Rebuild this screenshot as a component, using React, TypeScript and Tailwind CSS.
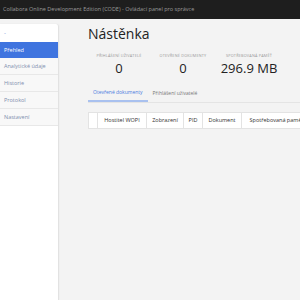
export default function App() {
  const nav = ["Analytické údaje", "Historie", "Protokol", "Nastavení"];
  return (
    <div className="flex h-[300px] w-[300px] flex-col overflow-hidden bg-[#f3f3f3] font-['Open_Sans',sans-serif]">
      <header className="flex h-[19px] shrink-0 items-center bg-[#1e1e1e] px-[3px] text-[5.5px] text-[#9a9a9a]">
        Collabora Online Development Edition (CODE) - Ovládací panel pro správce
      </header>
      <div className="flex flex-1 pt-[5px]">
        <aside className="w-[59px] shrink-0 rounded-tr-[3px] border-r border-[#e2e2e2] bg-white shadow-[0_0_2px_rgba(0,0,0,0.06)]">
          <div className="flex h-[18px] items-center px-[4px] text-[6px] text-[#6b8fd6]">-</div>
          <div className="flex h-[16px] items-center bg-[#3f74df] px-[4px] text-[5.5px] text-white">Přehled</div>
          {nav.map((n) => (
            <div
              key={n}
              className="flex h-[17px] items-center border-b border-[#e8e8e8] bg-[#f8f8f8] px-[4px] text-[5.5px] text-[#7f8fae]"
            >
              {n}
            </div>
          ))}
        </aside>
        <main className="min-w-0 flex-1 overflow-hidden pl-[29px]">
          <h1 className="mt-[1px] text-[14px] leading-[18px] text-[#222]">Nástěnka</h1>
          <div className="mt-[10px] flex text-center">
            <Stat label="PŘIHLÁŠENÍ UŽIVATELÉ" value="0" w="w-[62px]" />
            <Stat label="OTEVŘENÉ DOKUMENTY" value="0" w="w-[66px]" />
            <Stat label="SPOTŘEBOVANÁ PAMĚŤ" value="296.9 MB" w="w-[66px]" />
          </div>
          <div className="mt-[11px] flex h-[16px] items-center border-b border-[#e4e4e4] text-[5px]">
            <div className="flex h-full items-center border-b-2 border-[#a9c1ef] px-[5px] text-[#4a7be0]">
              Otevřené dokumenty
            </div>
            <div className="px-[5px] text-[#777]">Přihlášení uživatelé</div>
          </div>
          <div className="mt-[9px] flex h-[17px] w-[300px] border border-[#e3e3e3] bg-white text-[5.5px] text-[#333]">
            <div className="w-[9px] shrink-0 border-r border-[#e3e3e3]" />
            <Cell w="w-[49px]">Hostitel WOPI</Cell>
            <Cell w="w-[37px]">Zobrazení</Cell>
            <Cell w="w-[19px]">PID</Cell>
            <Cell w="w-[39px]">Dokument</Cell>
            <Cell w="w-[70px]">Spotřebovaná paměť</Cell>
          </div>
        </main>
      </div>
    </div>
  );
}

function Stat({ label, value, w }: { label: string; value: string; w: string }) {
  return (
    <div className={`${w} flex flex-col items-center`}>
      <div className="text-[3.8px] tracking-[0.2px] text-[#999]">{label}</div>
      <div className="mt-[2px] text-[13px] leading-[15px] text-[#222]">{value}</div>
    </div>
  );
}

function Cell({ w, children }: { w: string; children: React.ReactNode }) {
  return (
    <div className={`${w} flex shrink-0 items-center justify-center whitespace-nowrap border-r border-[#e3e3e3]`}>
      {children}
    </div>
  );
}
